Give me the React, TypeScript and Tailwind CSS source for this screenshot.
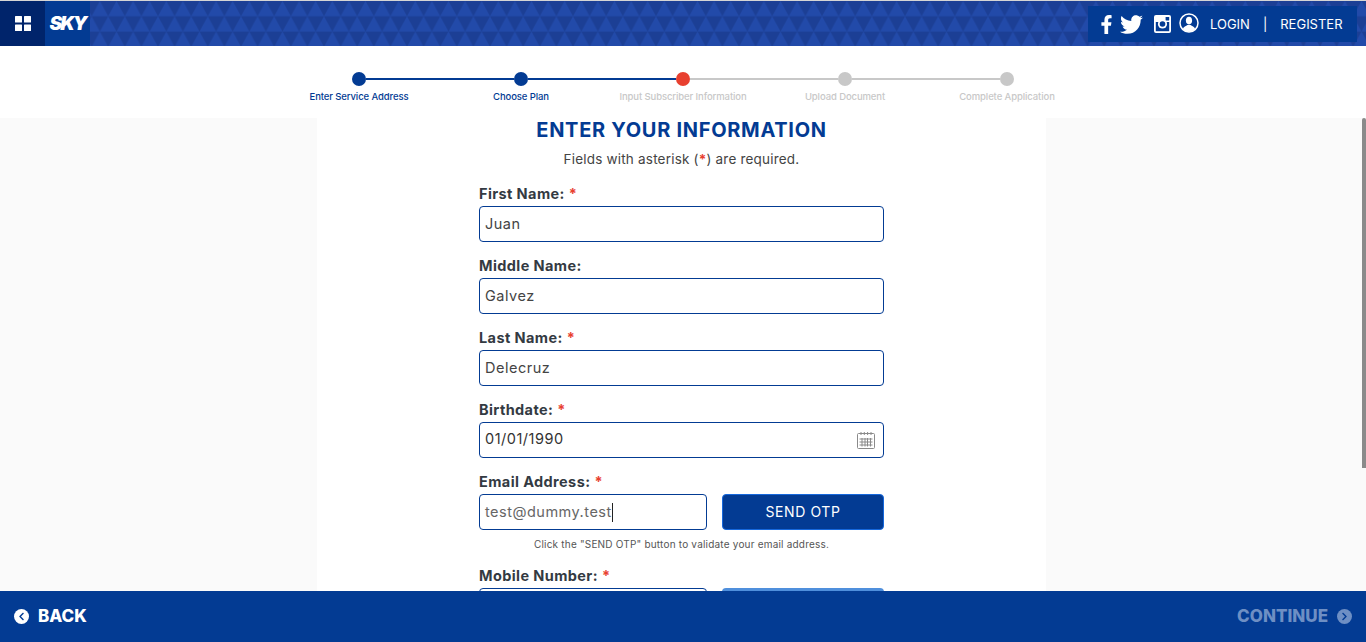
import { FaChevronLeft, FaChevronRight, FaFacebookF, FaTwitter } from "react-icons/fa"

const steps = [
  { label: "Enter Service Address", dot: "bg-[#033b93]", text: "text-[#033b93]" },
  { label: "Choose Plan", dot: "bg-[#033b93]", text: "text-[#033b93]" },
  { label: "Input Subscriber Information", dot: "bg-[#e8402f]", text: "text-[#c8c8c8]" },
  { label: "Upload Document", dot: "bg-[#c8c8c8]", text: "text-[#c8c8c8]" },
  { label: "Complete Application", dot: "bg-[#c8c8c8]", text: "text-[#c8c8c8]" },
]

const Star = () => <span className="ml-1 text-[#e8402f]">*</span>

const HeaderPattern = () => (
  <svg className="absolute inset-0 h-full w-full" aria-hidden="true">
    <defs>
      <pattern id="tri" width="16.6" height="30.6" patternUnits="userSpaceOnUse" patternTransform="translate(-8 0)">
        <path d="M0 15.3 8.3 0l8.3 15.3z" fill="#224aa9" />
        <path d="M-8.3 30.6 0 15.3l8.3 15.3zM8.3 30.6l8.3-15.3 8.3 15.3z" fill="#224aa9" />
      </pattern>
    </defs>
    <rect width="100%" height="100%" fill="url(#tri)" />
  </svg>
)

const GridIcon = () => (
  <svg width="16" height="15" viewBox="0 0 16 15" fill="#fff" aria-hidden="true">
    <rect width="7" height="6.5" rx="0.5" />
    <rect x="9" width="7" height="6.5" rx="0.5" />
    <rect y="8.5" width="7" height="6.5" rx="0.5" />
    <rect x="9" y="8.5" width="7" height="6.5" rx="0.5" />
  </svg>
)

const InstagramIcon = () => (
  <svg width="17" height="18" viewBox="0 0 17 18" aria-hidden="true">
    <rect width="17" height="18" rx="2" fill="#fff" />
    <rect x="1.8" y="7" width="13.4" height="9.2" fill="#033b93" />
    <circle cx="8.5" cy="9" r="4.6" fill="#fff" />
    <circle cx="8.5" cy="9" r="2.8" fill="#033b93" />
    <rect x="11.6" y="2" width="3.6" height="3.4" rx="0.4" fill="#033b93" />
  </svg>
)

const UserIcon = () => (
  <svg width="20" height="20" viewBox="0 0 20 20" aria-hidden="true">
    <circle cx="10" cy="10" r="9" fill="none" stroke="#fff" strokeWidth="1.5" />
    <ellipse cx="10" cy="7.6" rx="3.1" ry="3.8" fill="#fff" />
    <path d="M3.8 16c.6-2.5 3.4-3 4.6-4h3.2c1.2 1 4 1.5 4.6 4a8.4 8.4 0 0 1-12.4 0z" fill="#fff" />
  </svg>
)

const CalendarIcon = () => (
  <svg width="18" height="18" viewBox="0 0 18 18" fill="none" stroke="#8a8a8a" aria-hidden="true">
    <rect x="0.5" y="2.5" width="17" height="15" rx="1" />
    <path d="M4 1v3M7.3 1v3M10.6 1v3M14 1v3" />
    <path d="M2.5 8h13M2.5 11h13M2.5 14h13M5 7v8.5M8 7v8.5M10.5 7v8.5M13.5 7v8.5" />
  </svg>
)

const labelClass = "block h-[21px] text-[14.5px] leading-[18px] font-bold tracking-[0.4px] text-[#333a42]"

const Field = ({ label, required, value }: { label: string; required?: boolean; value: string }) => (
  <div className="h-[72px]">
    <label className={labelClass}>
      {label}
      {required && <Star />}
    </label>
    <div className="flex h-9 items-center rounded-[4px] border border-[#033b93] bg-white px-[5px] text-[14.5px] tracking-[0.5px] text-[#444]">
      {value}
    </div>
  </div>
)

export default function App() {
  return (
    <div
      className="flex h-[642px] flex-col overflow-hidden bg-white"
      style={{ fontFamily: "Inter, 'Open Sans', sans-serif" }}
    >
      <header className="relative flex h-[46px] items-stretch justify-between border-t border-[#d5d5d5] bg-[#1c3f95]">
        <HeaderPattern />
        <div className="relative flex">
          <div className="flex w-[45px] items-center justify-center bg-[#00246b]">
            <GridIcon />
          </div>
          <div className="flex w-[45px] items-center justify-center bg-[#033b93]">
            <span className="text-[19px] leading-none font-black tracking-[-2px] text-white italic">SKY</span>
          </div>
        </div>
        <div className="relative mt-[5px] mr-[9px] flex h-9 w-[269px] items-center bg-[#033b93] pl-[9px] text-white">
          <FaFacebookF className="text-[19px]" />
          <FaTwitter className="ml-[4px] text-[23px]" />
          <span className="ml-[11px]">
            <InstagramIcon />
          </span>
          <span className="mb-[3px] ml-[8px]">
            <UserIcon />
          </span>
          <span className="mt-[2px] ml-[11px] text-[13px]">LOGIN</span>
          <span className="mt-[2px] ml-[13px] text-[13px]">|</span>
          <span className="mt-[2px] ml-[13px] text-[13px]">REGISTER</span>
        </div>
      </header>

      <nav className="h-[72px] bg-white pt-[26px]">
        <div className="mx-auto flex w-[662px] items-center">
          {steps.map((step, i) => (
            <div key={step.label} className={i === 0 ? "flex items-center" : "flex flex-1 items-center"}>
              {i > 0 && <div className={i < 3 ? "h-[2px] flex-1 bg-[#033b93]" : "h-[2px] flex-1 bg-[#c8c8c8]"} />}
              <div className={`h-[14px] w-[14px] rounded-full ${step.dot}`} />
            </div>
          ))}
        </div>
        <div className="mx-auto mt-[4px] grid w-[810px] grid-cols-5">
          {steps.map((step) => (
            <div
              key={step.label}
              className={`text-center text-[9.5px] leading-[14px] font-medium tracking-[-0.1px] whitespace-nowrap ${step.text}`}
            >
              {step.label}
            </div>
          ))}
        </div>
      </nav>

      <main className="relative min-h-0 flex-1 overflow-hidden bg-[#fafafa]">
        <div className="ml-[317px] h-full w-[729px] bg-white">
          <h1 className="text-center text-[20px] leading-[24px] font-bold tracking-[0.7px] text-[#033b93]">
            ENTER YOUR INFORMATION
          </h1>
          <p className="mt-[8px] text-center text-[13.5px] leading-[18px] tracking-[0.2px] text-[#444]">
            Fields with asterisk (<span className="font-bold text-[#e8402f]">*</span>) are required.
          </p>
          <div className="mx-auto mt-[17px] w-[405px]">
            <Field label="First Name:" required value="Juan" />
            <Field label="Middle Name:" value="Galvez" />
            <Field label="Last Name:" required value="Delecruz" />
            <div className="h-[72px]">
              <label className={labelClass}>
                Birthdate:
                <Star />
              </label>
              <div className="flex h-9 items-center justify-between rounded-[4px] border border-[#033b93] bg-white pr-2 pl-[5px] text-[14.5px] tracking-[0.5px] text-[#333]">
                <span className="mb-[2px]">01/01/1990</span>
                <CalendarIcon />
              </div>
            </div>
            <label className={labelClass}>
              Email Address:
              <Star />
            </label>
            <div className="flex justify-between">
              <div className="flex h-9 w-[228px] items-center rounded-[4px] border border-[#033b93] bg-white px-[5px] text-[14.5px] tracking-[0.5px] text-[#666]">
                test@dummy.test
                <span className="h-[19px] w-px bg-[#222]" />
              </div>
              <button
                type="button"
                className="h-9 w-[162px] rounded-[4px] border border-[#1668dc] bg-[#033b93] pb-[2px] text-[14px] tracking-[0.6px] text-white"
              >
                SEND OTP
              </button>
            </div>
            <p className="mt-[7px] text-center text-[10px] leading-[14px] tracking-[0.2px] text-[#555]">
              Click the "SEND OTP" button to validate your email address.
            </p>
            <label className={`mt-[16px] ${labelClass}`}>
              Mobile Number:
              <Star />
            </label>
            <div className="flex justify-between">
              <div className="h-9 w-[228px] rounded-[4px] border border-[#033b93] bg-white" />
              <div className="h-9 w-[162px] rounded-[4px] bg-[#4f8fdc]" />
            </div>
          </div>
        </div>
        <div className="absolute top-0 right-0 h-[350px] w-[4px] rounded-t-[2px] bg-[#8a8a8a]" />
      </main>

      <footer className="flex h-[51px] items-center justify-between bg-[#033b93] px-[14px]">
        <div className="flex items-center gap-[9px] text-[17px] font-extrabold text-white">
          <span className="flex h-[15px] w-[15px] items-center justify-center rounded-full bg-white text-[#033b93]">
            <FaChevronLeft className="text-[9px]" />
          </span>
          BACK
        </div>
        <div className="flex items-center gap-[9px] text-[17px] font-extrabold text-[#6e8fc4]">
          CONTINUE
          <span className="flex h-[15px] w-[15px] items-center justify-center rounded-full bg-[#6e8fc4] text-[#033b93]">
            <FaChevronRight className="text-[9px]" />
          </span>
        </div>
      </footer>
    </div>
  )
}
